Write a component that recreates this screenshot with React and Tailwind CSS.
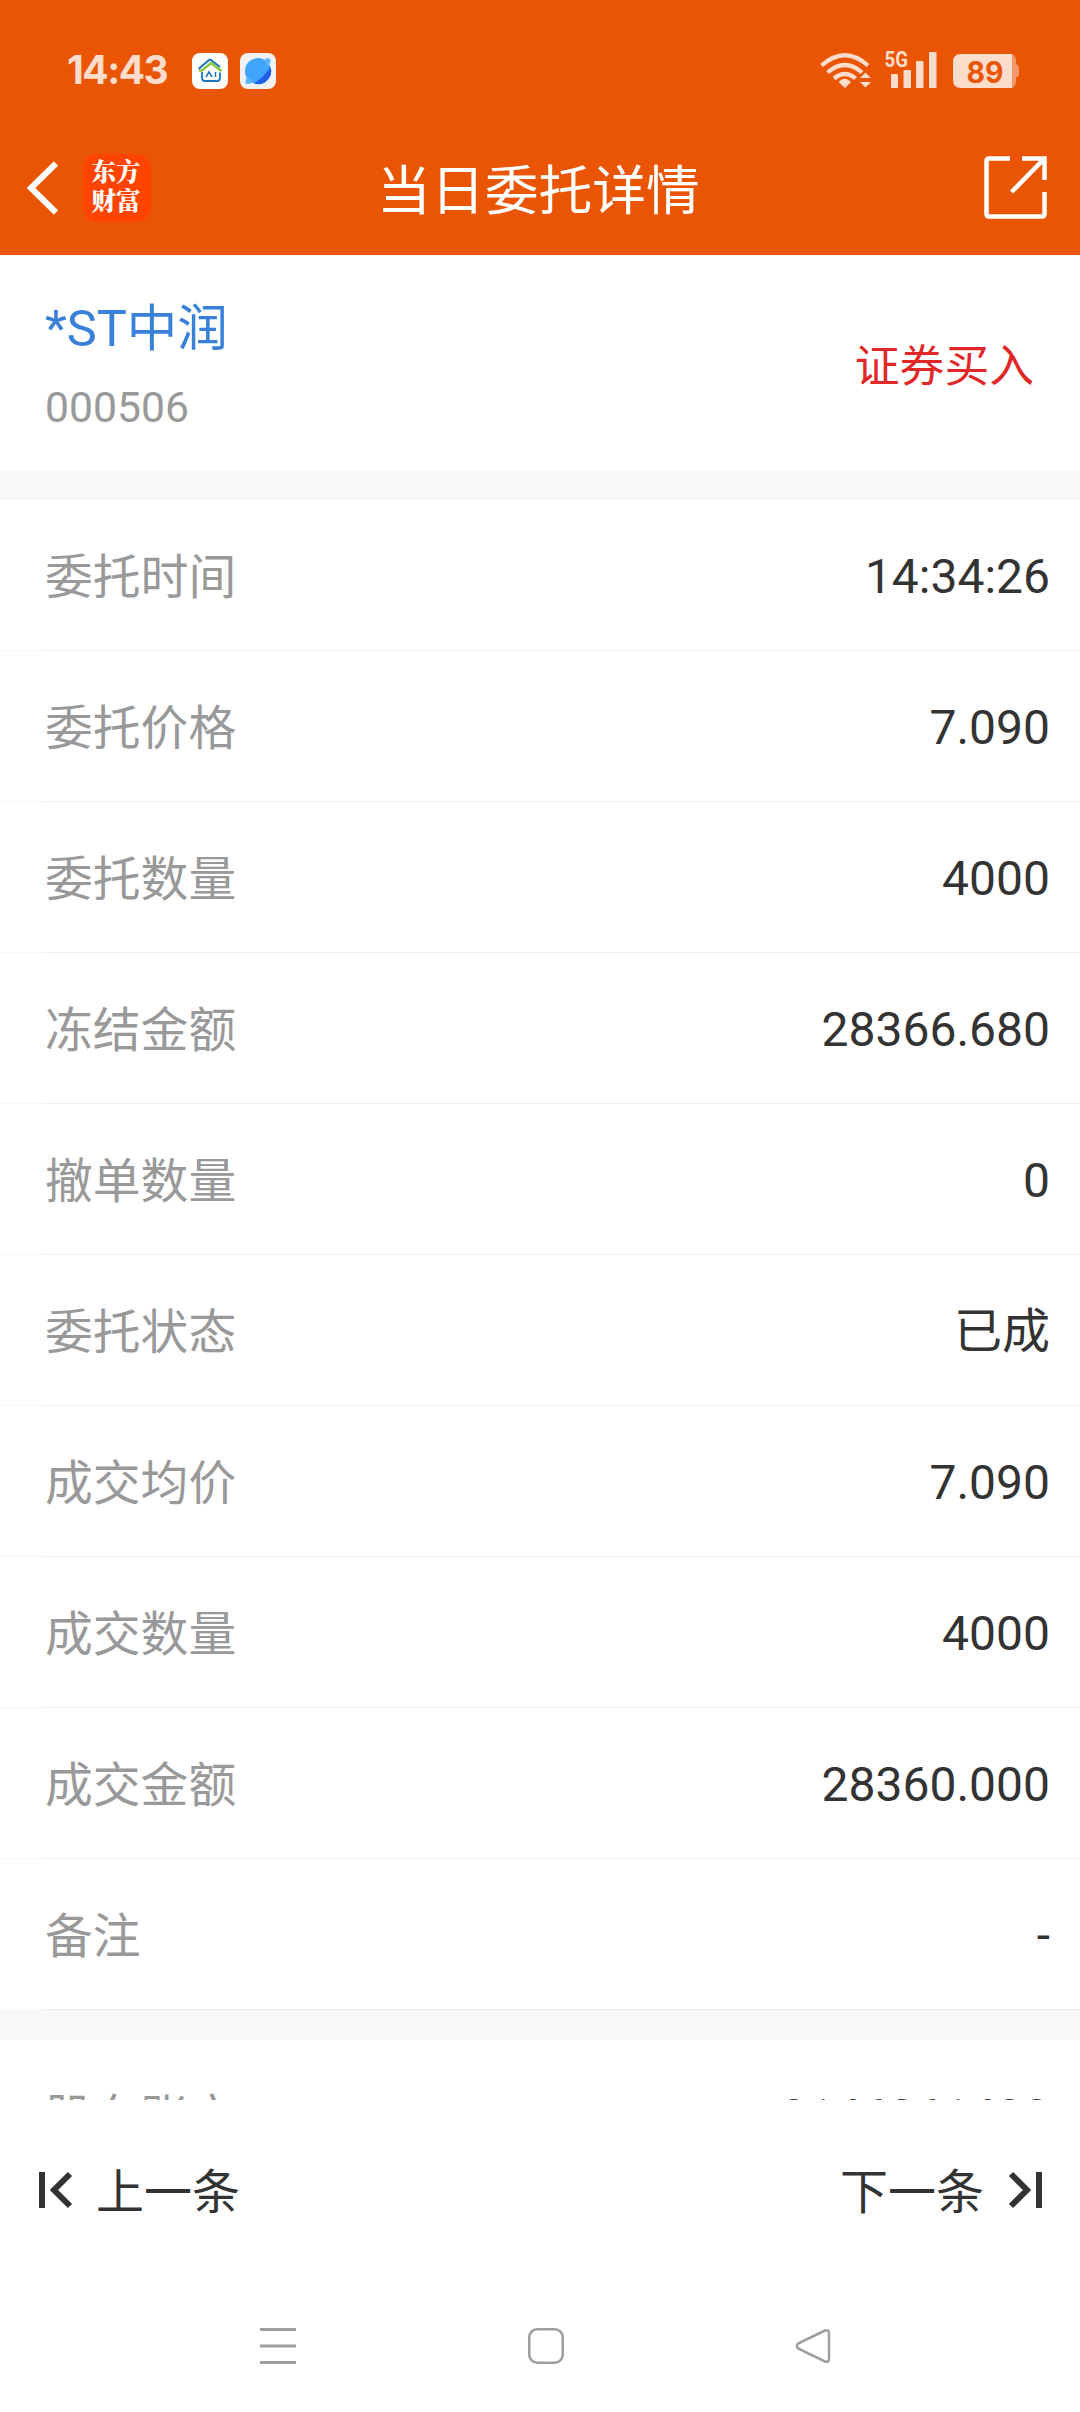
import React from 'react'

const rows = [
  { label: '委托时间', value: '14:34:26' },
  { label: '委托价格', value: '7.090' },
  { label: '委托数量', value: '4000' },
  { label: '冻结金额', value: '28366.680' },
  { label: '撤单数量', value: '0' },
  { label: '委托状态', value: '已成' },
  { label: '成交均价', value: '7.090' },
  { label: '成交数量', value: '4000' },
  { label: '成交金额', value: '28360.000' },
  { label: '备注', value: '-' },
]

function HouseIcon() {
  return (
    <svg width="36" height="36" viewBox="0 0 36 36" fill="none">
      <rect width="36" height="36" rx="8" fill="#fff" />
      <path d="M6.500 16 L17 7 Q18 6.500 19 7 L28 14" stroke="#1b75bb" strokeWidth="2" />
      <path d="M7 17.500 L10 17.500 L19 10 L29.500 18" stroke="#8cc63f" strokeWidth="2.400" />
      <path d="M10 19 V25 Q10 28 13 28 H25 Q28 28 28 25 V19.500" stroke="#1b75bb" strokeWidth="1.800" />
      <path d="M14 24 L17 19 L20 24 M23.500 19 V24" stroke="#1b75bb" strokeWidth="1.500" />
    </svg>
  )
}

function PlanetIcon() {
  return (
    <svg width="36" height="36" viewBox="0 0 36 36" fill="none">
      <rect width="36" height="36" rx="8" fill="#f0f1f3" />
      <circle cx="18" cy="18" r="13" fill="#3fa5fb" />
      <path d="M25 6 Q30 4 30.500 7 Q31 10 27 14Z M7 24 Q4 30 6.500 31 Q10 31.500 14 28.500Z" fill="#5cb4fc" />
      <path d="M30.500 14 A13 13 0 0 1 14 30.400 Q23 25 30.500 14Z" fill="#2060ea" />
    </svg>
  )
}

function StatusBar() {
  return (
    <div className="h-[88px] pt-[51px] pl-[67px] pr-[61px] flex items-start justify-between">
      <div className="pt-[2px] flex items-start">
        <span className="w-[125px] font-['Inter'] font-bold text-[39px] leading-[34px] tracking-[-1.500px] text-[#fcdccb]">14:43</span>
        <div className="flex gap-3">
          <HouseIcon />
          <PlanetIcon />
        </div>
      </div>

      <svg width="200" height="40" viewBox="0 -2 200 40" fill="none" className="overflow-visible">
        {/* wifi */}
        <g stroke="#fcdccb" strokeWidth="4.200">
          <path d="M2.500 12.500 Q26 -8 49 12.500" />
          <path d="M8.500 19.500 Q26 4.500 43 19.500" />
          <path d="M15 25.500 Q26 16.500 36.500 25.500" />
        </g>
        <path d="M19.500 29 Q25.500 22.500 32 29 L26 35Z" fill="#fcdccb" />
        <path d="M41 25 L46.500 19.500 L52 25Z M41 29 H52 L46.500 34.500Z" fill="#fcdccb" />
        {/* signal */}
        <text x="65.500" y="14" fontSize="21.500" fontWeight="700" fontFamily="Roboto, sans-serif" fill="#fcdccb" textLength="23.500" lengthAdjust="spacingAndGlyphs">5G</text>
        <g fill="#fcdccb">
          <rect x="72" y="21" width="7" height="14" rx="1" />
          <rect x="84.500" y="17" width="7.500" height="18" rx="1" />
          <rect x="97" y="8" width="7.500" height="27" rx="1" />
          <rect x="110" y="-1" width="7.500" height="36" rx="1" />
        </g>
        {/* battery */}
        <path d="M193 1 Q197 3 197 8 V11 Q200 12 200 15 V21 Q200 24 197 24 V28 Q197 33 193 35Z" fill="#f3976a" />
        <path d="M142 1 H193 V35 H142 Q134 35 134 27 V9 Q134 1 142 1Z" fill="#fcdccb" />
        <text x="166" y="29.500" fontSize="30" fontWeight="700" fontFamily="Inter, sans-serif" fill="#ea5504" textAnchor="middle" textLength="37" lengthAdjust="spacingAndGlyphs">89</text>
      </svg>
    </div>
  )
}

function TitleBar() {
  return (
    <div className="h-[167px] pl-[26px] pr-[32px] pt-[32px] grid grid-cols-[1fr_auto_1fr] items-center">
      <div className="flex items-center">
        <svg width="34" height="56" viewBox="0 0 34 56" fill="none">
          <path d="M30 3.500 L5 28 L30 52.500" stroke="#fff" strokeWidth="6" />
        </svg>
        <div className="ml-[23px] w-[68px] h-[68px] rounded-[14px] bg-[#ff4400] flex flex-col items-center justify-center pb-[5px] pr-[2px] font-['Noto_Serif_CJK_SC','Noto_Sans_CJK_SC',sans-serif] font-black text-[24.500px] leading-[29px] text-white">
          <span>东方</span>
          <span>财富</span>
        </div>
      </div>
      <h1 className="pt-[9px] pl-[3px] font-['Roboto','Noto_Sans_CJK_SC',sans-serif] text-[53.800px] leading-[64px] text-white">当日委托详情</h1>
      <svg width="64" height="64" viewBox="0 0 64 64" fill="none" className="justify-self-end" stroke="#fff" strokeWidth="4.500">
        <path d="M26 2.500 H5 Q2.500 2.500 2.500 5 V58 Q2.500 60.500 5 60.500 H58 Q60.500 60.500 60.500 58 V36" />
        <path d="M38 2.500 H60.500 V24 M60 3 L27.500 36" />
      </svg>
    </div>
  )
}

function Row({ label, value }) {
  return (
    <div className="h-[151px] flex flex-col bg-white">
      <div className="h-[150px] pl-[45px] pr-[30px] pt-[4px] flex items-center justify-between">
        <span className="pt-[2px] text-[47.800px] text-[#999999]">{label}</span>
        <span className="text-[#333333]">{value}</span>
      </div>
      <div className="h-px pl-[45px] bg-[#f7f8fa]">
        <div className="h-px bg-[#eeeeee]" />
      </div>
    </div>
  )
}

export default function App() {
  return (
    <div className="w-[1080px] h-[2412px] overflow-hidden flex flex-col bg-white text-[48px] leading-[70px] font-['Roboto','Noto_Sans_CJK_SC',sans-serif]">
      <header className="shrink-0 bg-[#ea5504]">
        <StatusBar />
        <TitleBar />
      </header>

      <main className="h-[1845px] shrink-0 overflow-hidden">
        <section className="h-[215px] pl-[45px] pr-[46px] pt-[7px] flex items-center justify-between">
          <div className="flex flex-col">
            <span className="text-[50.500px] leading-[72px] text-[#3880d8]">*ST中润</span>
            <span className="mt-[10px] text-[42.700px] leading-[64px] text-[#999999]">000506</span>
          </div>
          <span className="pt-[1px] text-[44.800px] text-[#e02828]">证券买入</span>
        </section>

        <div className="h-[30px] bg-[#f7f8fa]" />

        <section>
          {rows.map((r) => (
            <Row key={r.label} label={r.label} value={r.value} />
          ))}
        </section>

        <div className="h-[30px] bg-[#f7f8fa]" />

        <Row label="股东账户" value="0146061400" />
      </main>

      <div className="h-[180px] shrink-0 pl-[38px] pr-[37px] flex items-center justify-between text-[#333333]">
        <button className="flex items-center">
          <svg width="36" height="38" viewBox="0 0 36 38" fill="none" stroke="#333" strokeWidth="6">
            <path d="M4 1 V37 M32 3 L16 19 L32 35" />
          </svg>
          <span className="ml-[22px] pt-[5px]">上一条</span>
        </button>
        <button className="flex items-center">
          <span className="mr-[23px] pt-[5px]">下一条</span>
          <svg width="36" height="38" viewBox="0 0 36 38" fill="none" stroke="#333" strokeWidth="6">
            <path d="M32 1 V37 M4 3 L20 19 L4 35" />
          </svg>
        </button>
      </div>

      {/* system navigation */}
      <nav className="h-[132px] shrink-0 pl-[260px] pr-[249px] flex items-center justify-between">
        <svg width="36" height="36" viewBox="0 0 36 36" fill="none" stroke="#9e9e9e" strokeWidth="3">
          <path d="M0 1.500 H36 M0 18 H36 M0 34.500 H36" />
        </svg>
        <svg width="36" height="36" viewBox="0 0 36 36" fill="none">
          <rect x="1.250" y="1.250" width="33.500" height="33.500" rx="8" stroke="#9e9e9e" strokeWidth="2.500" />
        </svg>
        <svg width="36" height="36" viewBox="0 0 36 36" fill="none">
          <path d="M30 2.500 L3 15.500 Q0.800 18 3 20.500 L30 33.500 Q34 34.500 34 31 V5 Q34 1.500 30 2.500Z" stroke="#9e9e9e" strokeWidth="2.500" />
        </svg>
      </nav>
    </div>
  )
}
